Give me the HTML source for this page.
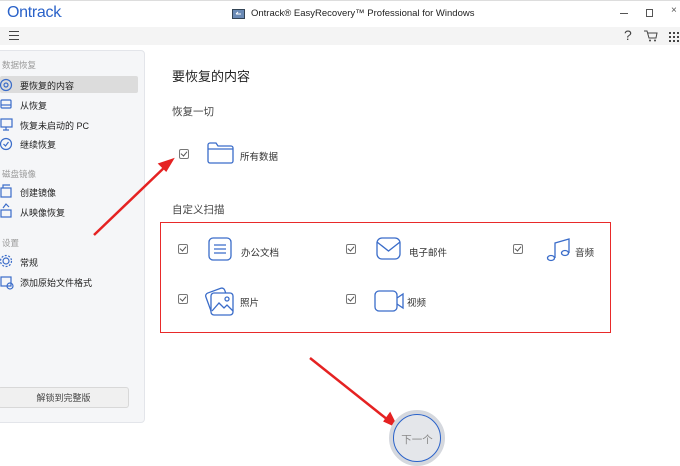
<!DOCTYPE html>
<html><head><meta charset="utf-8"><style>
*{margin:0;padding:0;box-sizing:border-box}
body{width:680px;height:449px;overflow:hidden;background:#fff;font-family:"Liberation Sans","Noto Sans CJK SC",sans-serif;position:relative;color:#333}
.a{position:absolute}
.t{font-size:9.5px;color:#333;white-space:nowrap}
.cb{position:absolute;width:10px;height:10px;border:1px solid #777;border-radius:2px}
.cb:after{content:"";position:absolute;left:2px;top:0px;width:3px;height:5px;border:solid #555;border-width:0 1px 1px 0;transform:rotate(40deg)}
.sl{position:absolute;left:20px;font-size:9px;color:#222;white-space:nowrap}
.sh{position:absolute;left:2px;font-size:8.5px;color:#999}
</style></head><body>
<div class="a" style="left:0;top:0;width:680px;height:1px;background:#ddd"></div>
<div class="a" style="left:7px;top:4px;font-size:16px;color:#2a62c9;letter-spacing:-0.3px">Ontrack<span style="font-size:6px">.</span></div>
<svg class="a" style="left:232px;top:8px" width="13" height="11"><rect x="0.5" y="1.5" width="12" height="9" fill="#6b8bb6" stroke="#345" /><path d="M4 6h5M4 6l2-2" stroke="#fff" fill="none"/></svg>
<div class="a" style="left:251px;top:8px;font-size:9.5px;color:#222">Ontrack® EasyRecovery™ Professional for Windows</div>
<div class="a" style="left:620px;top:13px;width:8px;height:1px;background:#555"></div>
<div class="a" style="left:646px;top:9px;width:7px;height:8px;border:1px solid #555"></div>
<div class="a" style="left:671px;top:5px;font-size:10px;color:#555">×</div>
<div class="a" style="left:0;top:27px;width:680px;height:18px;background:#f4f4f4"></div>
<div class="a" style="left:9px;top:31px;width:10px;height:9px;border-top:1px solid #444;border-bottom:1px solid #444"><div style="margin-top:3px;height:1px;background:#444"></div></div>
<div class="a" style="left:624px;top:27px;font-size:14px;color:#444">?</div>
<svg class="a" style="left:644px;top:30px" width="14" height="12"><path d="M0 1h3l2 7h7l1-5H4" fill="none" stroke="#444"/><circle cx="6" cy="10.5" r="1" fill="#444"/><circle cx="11" cy="10.5" r="1" fill="#444"/></svg>
<svg class="a" style="left:669px;top:32px" width="11" height="10" fill="#444"><rect x="0" y="0" width="2" height="2"/><rect x="4" y="0" width="2" height="2"/><rect x="8" y="0" width="2" height="2"/><rect x="0" y="4" width="2" height="2"/><rect x="4" y="4" width="2" height="2"/><rect x="8" y="4" width="2" height="2"/><rect x="0" y="8" width="2" height="2"/><rect x="4" y="8" width="2" height="2"/><rect x="8" y="8" width="2" height="2"/></svg>
<div class="a" style="left:-4px;top:50px;width:149px;height:373px;background:#f5f6f8;border:1px solid #e3e5ea;border-radius:4px"></div>
<div class="sh" style="top:59px">数据恢复</div>
<div class="a" style="left:0;top:76px;width:138px;height:17px;background:#dcdcdc;border-radius:2px"></div>
<div class="sl" style="top:79px">要恢复的内容</div>
<div class="sl" style="top:99px">从恢复</div>
<div class="sl" style="top:119px">恢复未启动的 PC</div>
<div class="sl" style="top:138px">继续恢复</div>
<div class="sh" style="top:168px">磁盘镜像</div>
<div class="sl" style="top:186px">创建镜像</div>
<div class="sl" style="top:206px">从映像恢复</div>
<div class="sh" style="top:237px">设置</div>
<div class="sl" style="top:256px">常规</div>
<div class="sl" style="top:276px">添加原始文件格式</div>
<svg class="a" style="left:0;top:78px" width="14" height="220" fill="none" stroke="#3a6cc9" stroke-width="1.2">
<circle cx="6" cy="7" r="5.5"/><circle cx="6" cy="7" r="2"/>
<rect x="1" y="22" width="10" height="8" rx="1"/><path d="M1 27h10"/>
<rect x="1" y="41" width="11" height="8"/><path d="M6 49v3M3 52h6"/>
<circle cx="6" cy="66" r="5.5"/><path d="M3.5 66l2 2 3-4"/>
<rect x="1" y="110" width="10" height="9"/><path d="M3 110v-3h7"/>
<rect x="1" y="132" width="10" height="7"/><path d="M3 130l3-4 3 3"/>
<circle cx="6" cy="183" r="3"/><circle cx="6" cy="183" r="5.5" stroke-dasharray="2 1.5"/>
<rect x="1" y="199" width="10" height="9"/><circle cx="10" cy="208" r="3"/>
</svg>
<div class="a" style="left:-2px;top:387px;width:131px;height:21px;background:#f0f0f0;border:1px solid #d8d8d8;border-radius:3px;font-size:9px;color:#444;text-align:center;line-height:20px">解锁到完整版</div>
<div class="a" style="left:172px;top:66px;font-size:13px;color:#222">要恢复的内容</div>
<div class="a" style="left:172px;top:104px;font-size:10.5px;color:#444">恢复一切</div>
<div class="cb" style="left:179px;top:149px"></div>
<svg class="a" style="left:207px;top:142px" width="27" height="22" fill="none" stroke="#3a6cc9" stroke-width="1.3"><path d="M1 3a2 2 0 0 1 2-2h6l2 3h13a2 2 0 0 1 2 2v13a2 2 0 0 1-2 2H3a2 2 0 0 1-2-2z"/><path d="M1 7h25"/></svg>
<div class="t a" style="left:240px;top:149px">所有数据</div>
<div class="a" style="left:172px;top:202px;font-size:10.5px;color:#444">自定义扫描</div>
<div class="a" style="left:160px;top:222px;width:451px;height:111px;border:1.5px solid #e82a2a"></div>
<div class="cb" style="left:178px;top:244px"></div>
<div class="cb" style="left:346px;top:244px"></div>
<div class="cb" style="left:513px;top:244px"></div>
<div class="cb" style="left:178px;top:294px"></div>
<div class="cb" style="left:346px;top:294px"></div>
<svg class="a" style="left:205px;top:236px" width="400" height="80" fill="none" stroke="#3a6cc9" stroke-width="1.3">
<rect x="4" y="2" width="22" height="22" rx="4"/><path d="M9 9h12M9 13h12M9 17h12"/>
<rect x="172" y="2" width="23" height="21" rx="5"/><path d="M172 6l11.5 9 11.5-9"/>
<path d="M350 22V7l14-4v14"/><ellipse cx="346" cy="22" rx="3.5" ry="2.5"/><ellipse cx="360" cy="17" rx="3.5" ry="2.5"/>
<rect x="3" y="54" width="20" height="22" rx="3" transform="rotate(-20 13 65)"/><rect x="6" y="57" width="22" height="22" rx="3" fill="#fff"/><circle cx="22" cy="63" r="2"/><path d="M7 75l7-8 5 5 3-3 6 6"/>
<rect x="170" y="55" width="22" height="20" rx="4"/><path d="M192 62l6-4v14l-6-4"/>
</svg>
<div class="t a" style="left:241px;top:245px">办公文档</div>
<div class="t a" style="left:409px;top:245px">电子邮件</div>
<div class="t a" style="left:575px;top:245px">音频</div>
<div class="t a" style="left:240px;top:295px">照片</div>
<div class="t a" style="left:407px;top:295px">视频</div>
<svg class="a" style="left:0;top:0" width="680" height="449"><g stroke="#e52222" stroke-width="2.5" fill="#e52222"><path d="M94 235L168 164" fill="none"/><path d="M172 160l-12 4 6 6z"/><path d="M310 358L388 420" fill="none"/><path d="M396 426l-6-12-5 7z"/></g></svg>
<div class="a" style="left:389px;top:410px;width:56px;height:56px;border-radius:50%;background:#e4e6ea;border:4px solid #d5d8de"><div style="position:absolute;inset:0;border:1.5px solid #2a62c9;border-radius:50%"></div><div style="position:absolute;left:0;right:0;top:18px;text-align:center;font-size:10.5px;color:#888">下一个</div></div>
</body></html>
